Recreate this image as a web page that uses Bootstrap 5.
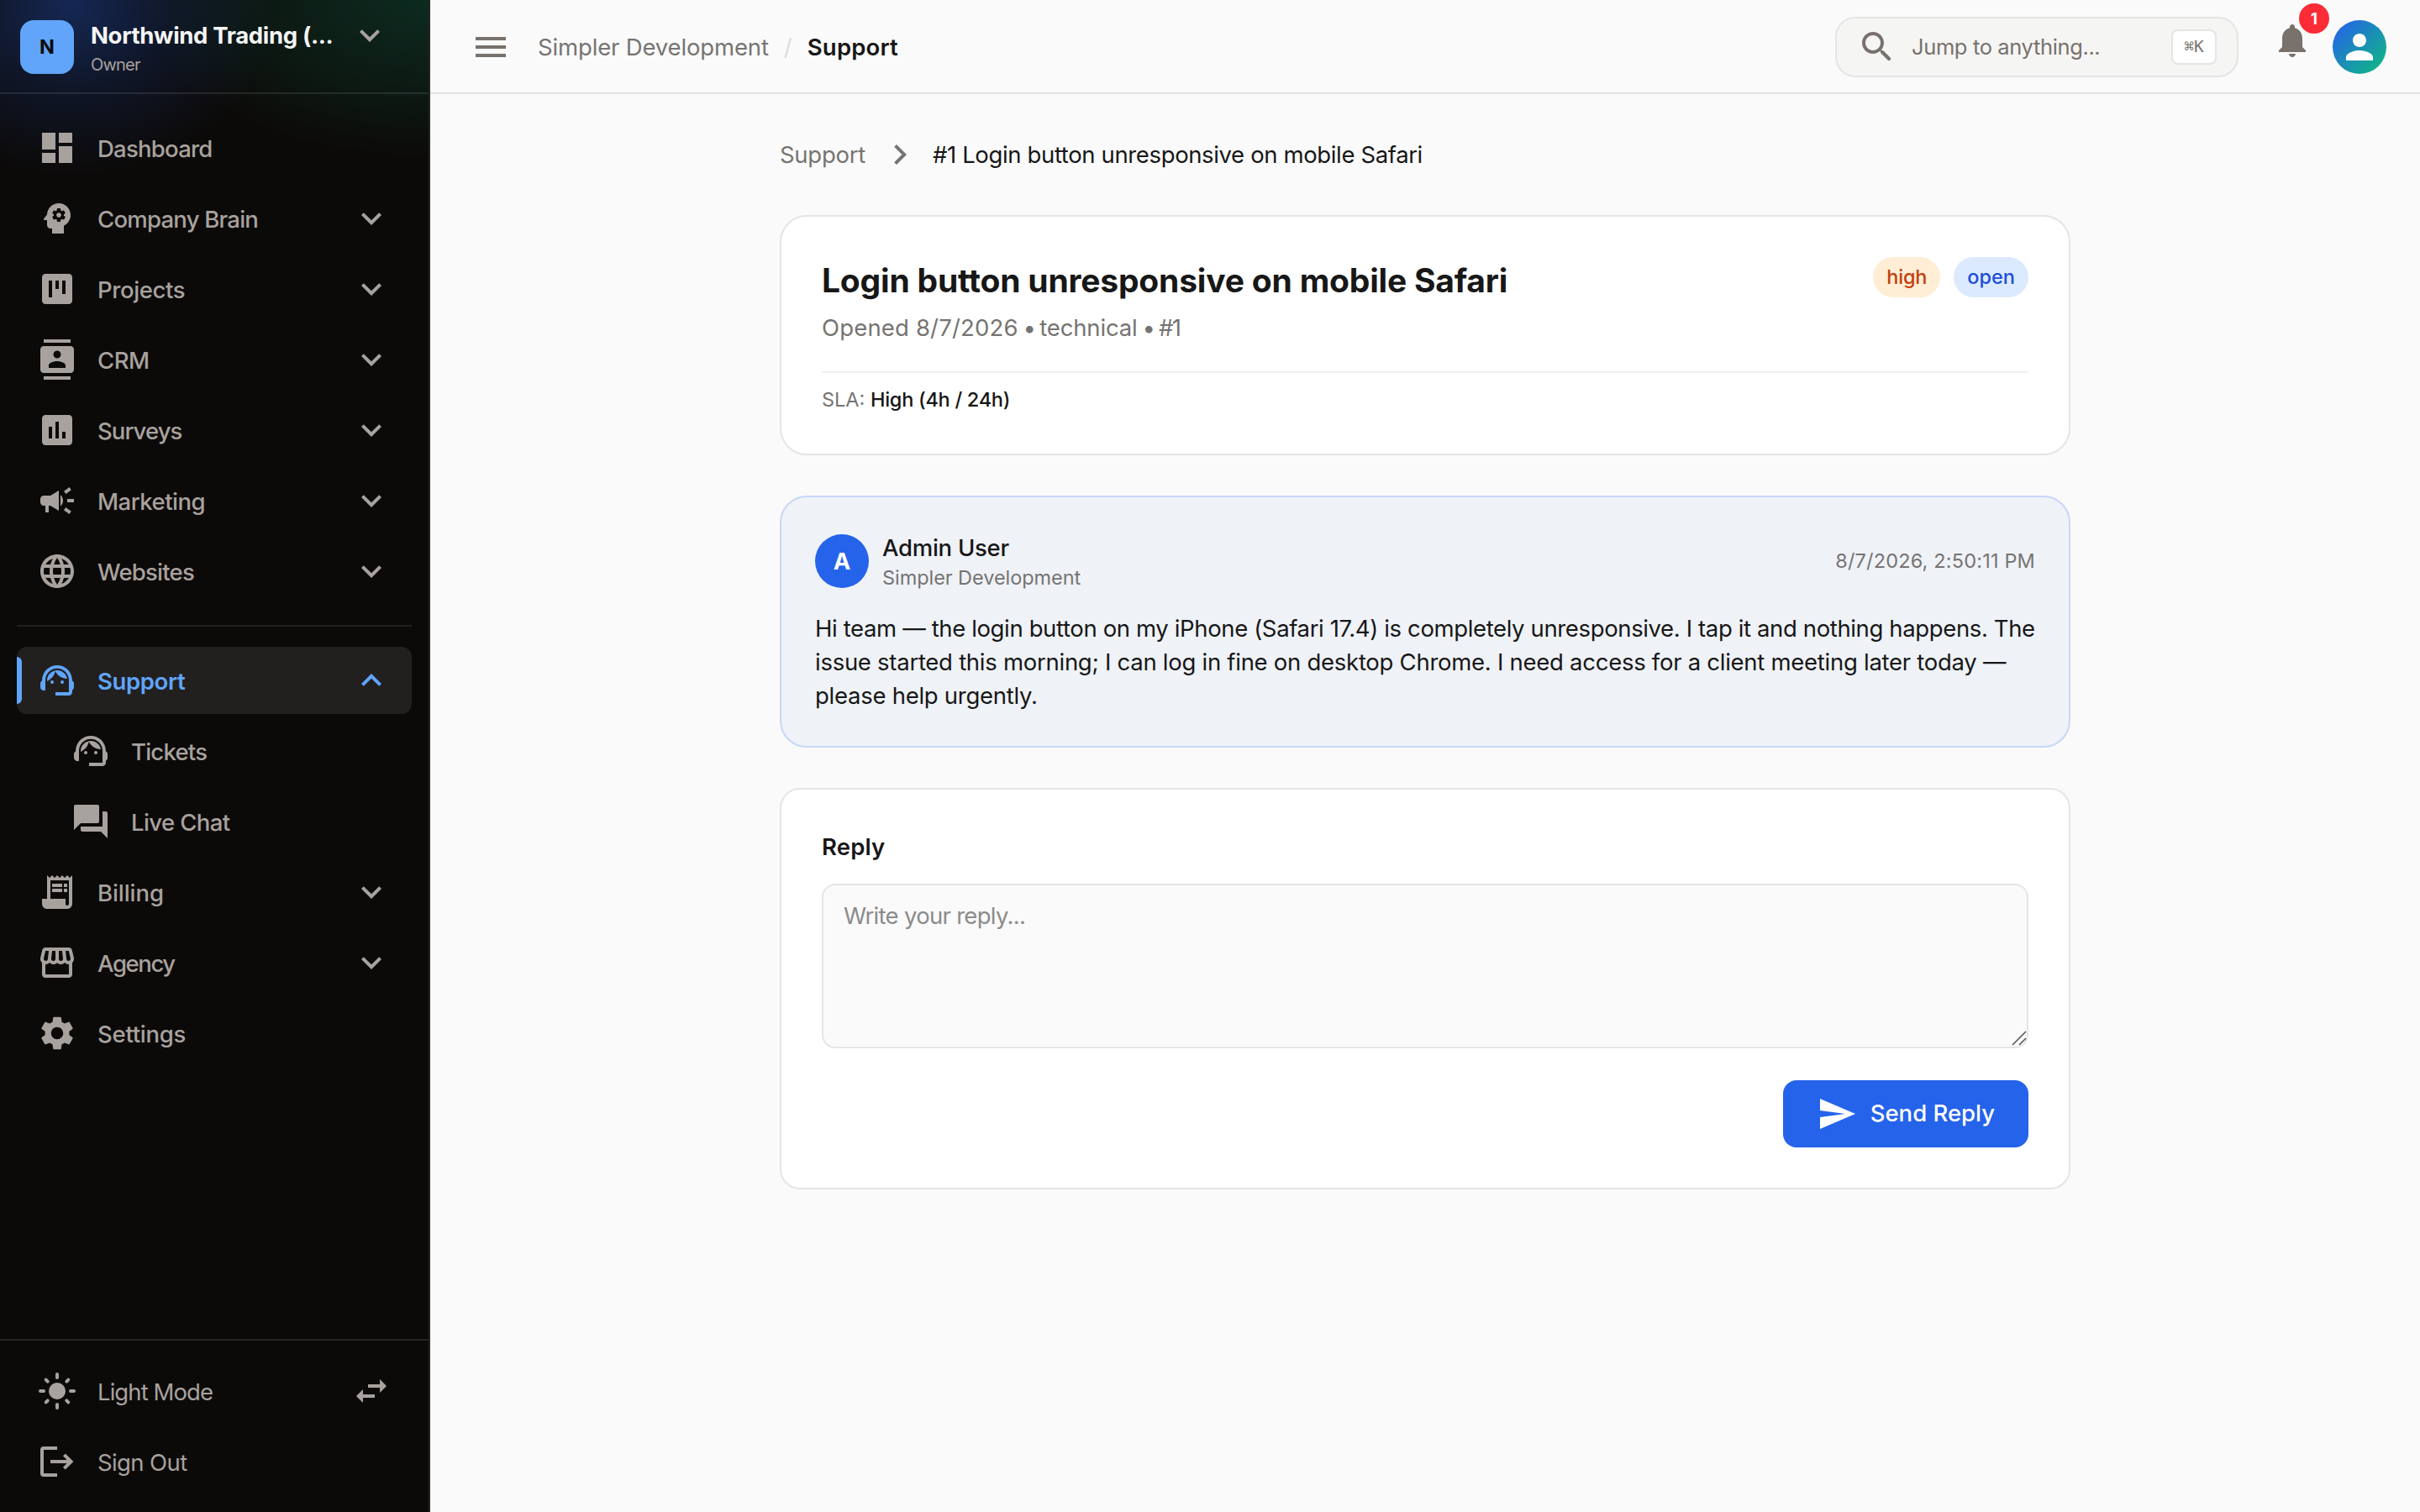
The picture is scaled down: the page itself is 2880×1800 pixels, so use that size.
<!DOCTYPE html>
<html lang="en">
<head>
<meta charset="utf-8">
<meta name="viewport" content="width=device-width, initial-scale=1">
<title>Support ticket #1</title>
<link href="https://cdn.jsdelivr.net/npm/bootstrap@5.3.0/dist/css/bootstrap.min.css" rel="stylesheet">
<style>
  :root { --ink: #171717; --muted: #78716c; --muted-text: #767472; --line: #e5e5e5; --canvas: #fafafa; --brand: #2563eb; --side: #a8a29e; }
  body { font-family: Inter, "Liberation Sans", sans-serif; font-size: 27.5px; line-height: 40px; color: var(--ink); background: var(--canvas); }
  .ico { width: 48px; height: 48px; fill: currentColor; flex: none; display: block; }

  /* Sidebar */
  .sidebar { width: 512px; border-right: 2px solid #262423; color: var(--side);
    background:
      radial-gradient(340px 190px at 510px 0, rgba(16,185,129,.19), rgba(16,185,129,.10) 50%, rgba(16,185,129,0) 100%),
      radial-gradient(240px 200px at 85px 8px, rgba(37,99,235,.33), rgba(37,99,235,.13) 50%, rgba(37,99,235,0) 100%),
      #0c0a09; }
  .side-head { height: 112px; border-bottom: 2px solid rgba(255,255,255,.1); padding: 22px 50px 0 24px; gap: 20px; }
  .org-logo { width: 64px; height: 64px; margin-top: 2px; border-radius: 16px; background: #60a5fa; color: #0c0a09; font-size: 23.5px; font-weight: 700; }
  .org-name { font-weight: 700; color: #f5f5f4; letter-spacing: -.34px; white-space: nowrap; }
  .org-role { font-size: 20px; line-height: 30px; letter-spacing: -.8px; }
  .side-head .ico { margin-top: -4px; }
  .side-nav { padding: 24px 20px; gap: 4px; }
  .side-foot { border-top: 2px solid #262423; padding: 20px; gap: 4px; }
  .side-link { display: flex; align-items: center; gap: 24px; height: 80px; padding: 0 24px; border-radius: 12px; color: var(--side); font-weight: 500; text-decoration: none; position: relative; }
  .side-link > span { flex: 1; white-space: nowrap; padding-top: 1px; }
  .side-foot .side-link { font-weight: 400; }
  .side-sub { margin-left: 40px; }
  .side-link.current { background: #22201f; color: #60a5fa; font-weight: 600; }
  .side-link.current::before { content: ""; position: absolute; left: 0; top: 12px; width: 6px; height: 56px; background: #60a5fa; border-radius: 0 6px 6px 0; }
  .side-rule { height: 2px; background: #22201f; margin: 20px 0; }

  /* Tracking steps */
  .tr-0 { letter-spacing: -.06px; } .tr-1 { letter-spacing: -.15px; } .tr-2 { letter-spacing: -.27px; }
  .tr-3 { letter-spacing: -.37px; } .tr-5 { letter-spacing: -.5px; } .tr-6 { letter-spacing: -.61px; }
  .tr-7 { letter-spacing: -.76px; } .tr-9 { letter-spacing: -.92px; } .tr-14 { letter-spacing: -1.4px; }
  .tr-18 { letter-spacing: -1.8px; } .tr-wide { letter-spacing: .17px; }

  /* Top bar */
  .topbar { height: 112px; border-bottom: 2px solid #e3e3e3; padding: 2px 40px 0 48px; }
  .trail { gap: 16px; }
  .trail .sep { color: #dcdcdc; width: 14px; text-align: center; }
  .quick { width: 480px; height: 72px; border: 2px solid var(--line); border-radius: 24px; background: #f5f5f4; padding: 0 24px; gap: 17px; color: var(--muted); font-size: 25.5px; margin-right: 40px; }
  .keycap { width: 54px; height: 42px; border: 2px solid var(--line); border-radius: 8px; background: #fff; font: 19.5px/38px "DejaVu Sans Mono", monospace; text-align: center; }
  .bell { color: var(--muted); margin: 0 24px 16px 0; }
  .bell-count { position: absolute; left: 32px; top: -20px; width: 36px; height: 36px; border-radius: 50%; background: #fb2c36; color: #fff; font-size: 18.5px; font-weight: 700; line-height: 36px; text-align: center; }
  .me { width: 64px; height: 64px; border-radius: 50%; background: linear-gradient(135deg, #2563eb 5%, #10b981 95%); color: #fff; }

  /* Ticket */
  .thread { width: 1536px; padding-top: 48px; }
  .crumbs { height: 48px; margin-bottom: 48px; }
  .crumbs .ico { margin: 0 15px 0 17px; }
  .panel { background: #fff; border: 2px solid var(--line); border-radius: 32px; padding: 48px; margin-bottom: 48px; }
  .ticket-title { font-size: 39px; line-height: 56px; font-weight: 700; letter-spacing: -.19px; margin: 0 0 8px; }
  .soft { color: var(--muted-text); }
  .fine { font-size: 23.5px; line-height: 32px; }
  .pill { height: 48px; line-height: 48px; padding: 0 16px; border-radius: 24px; font-size: 23.5px; font-weight: 500; }
  .pill-high { background: #ffedd5; color: #c2410c; letter-spacing: -.15px; }
  .pill-open { background: #dbeafe; color: #1d4ed8; }
  .sla { border-top: 2px solid #f0f0f0; margin-top: 32px; padding-top: 16px; }
  .panel-msg { background: #eff2f7; border-color: #c8d7f6; padding: 40px; }
  .author { width: 64px; height: 64px; border-radius: 50%; background: var(--brand); color: #fff; font-weight: 700; margin-right: 16px; }
  .panel-reply { border-radius: 24px; }
  .reply-box { height: 196px; border: 2px solid var(--line); border-radius: 16px; background: var(--canvas); padding: 16px 24px; font-size: 27.5px; line-height: 40px; resize: none; display: block; }
  .reply-box::placeholder { color: #8b8b8b; letter-spacing: -.7px; }
  .grip { position: absolute; right: 2px; bottom: 3px; width: 18px; height: 18px; stroke: #555; stroke-width: 1.6; fill: none; }
  .send { height: 80px; margin-top: 38px; padding: 0 40px; border: 0; border-radius: 16px; background: var(--brand); color: #fff; font-size: 27.5px; font-weight: 500; gap: 16px; }
</style>
<script src="https://cdn.jsdelivr.net/npm/bootstrap@5.3.0/dist/js/bootstrap.bundle.min.js"></script>
</head>
<body>
<svg class="d-none" xmlns="http://www.w3.org/2000/svg">
  <symbol id="more" viewBox="0 0 24 24"><path d="M16.59 8.59L12 13.17 7.41 8.59 6 10l6 6 6-6z"/></symbol>
  <symbol id="less" viewBox="0 0 24 24"><path d="M12 8l-6 6 1.41 1.41L12 10.83l4.59 4.58L18 14z"/></symbol>
  <symbol id="agent" viewBox="0 0 24 24"><path d="M21 12.22C21 6.73 16.74 3 12 3c-4.69 0-9 3.65-9 9.28-.6.34-1 .98-1 1.72v2c0 1.1.9 2 2 2h1v-6.1c0-3.87 3.13-7 7-7s7 3.13 7 7V19h-8v2h8c1.1 0 2-.9 2-2v-1.22c.59-.31 1-.92 1-1.64v-2.3c0-.7-.41-1.31-1-1.62z"/><circle cx="9" cy="13" r="1"/><circle cx="15" cy="13" r="1"/><path d="M18 11.03C17.52 8.18 15.04 6 12.05 6c-3.03 0-6.29 2.51-6.03 6.45 2.47-1.01 4.33-3.21 4.86-5.89 1.31 2.63 4 4.44 7.12 4.47z"/></symbol>
</svg>

<div class="d-flex vh-100 overflow-hidden">
  <aside class="sidebar d-flex flex-column flex-shrink-0">
    <div class="side-head d-flex align-items-start flex-shrink-0">
      <div class="org-logo d-flex align-items-center justify-content-center flex-shrink-0">N</div>
      <div class="flex-grow-1">
        <div class="org-name">Northwind Trading (...</div>
        <div class="org-role">Owner</div>
      </div>
      <svg class="ico"><use href="#more"/></svg>
    </div>

    <nav class="side-nav d-flex flex-column flex-grow-1">
      <a class="side-link" href="#"><svg class="ico" viewBox="0 0 24 24"><path d="M3 13h8V3H3v10zm0 8h8v-6H3v6zm10 0h8V11h-8v10zm0-18v6h8V3h-8z"/></svg><span class="tr-7">Dashboard</span></a>
      <a class="side-link" href="#"><svg class="ico" viewBox="0 0 24 24"><path d="M13 8.57c-.79 0-1.43.64-1.43 1.43s.64 1.43 1.43 1.43 1.43-.64 1.43-1.43-.64-1.43-1.43-1.43z"/><path d="M13 3C9.25 3 6.2 5.94 6.02 9.64L4.1 12.2c-.25.33-.01.8.4.8H6v3c0 1.1.9 2 2 2h1v3h7v-4.68c2.36-1.12 4-3.53 4-6.32 0-3.87-3.13-7-7-7zm3 7c0 .13-.01.26-.02.39l.83.66c.08.06.1.16.05.25l-.8 1.39c-.05.09-.16.12-.24.09l-.99-.4c-.21.16-.43.29-.67.39L14 13.83c-.01.1-.1.17-.2.17h-1.6c-.1 0-.18-.07-.2-.17l-.15-1.06c-.25-.1-.47-.23-.68-.39l-.99.4c-.09.03-.2 0-.25-.09l-.8-1.39c-.05-.08-.03-.19.05-.25l.84-.66c-.01-.13-.02-.26-.02-.39s.02-.27.04-.39l-.85-.66c-.08-.06-.1-.16-.05-.26l.8-1.38c.05-.09.15-.12.24-.09l1 .4c.2-.15.43-.29.67-.39L12 6.17c.02-.1.1-.17.2-.17h1.6c.1 0 .18.07.2.17l.15 1.06c.24.1.46.23.67.39l1-.4c.09-.03.2 0 .24.09l.8 1.38c.05.09.03.2-.05.26l-.85.66c.03.12.04.25.04.39z"/></svg><span class="tr-7">Company Brain</span><svg class="ico"><use href="#more"/></svg></a>
      <a class="side-link" href="#"><svg class="ico" viewBox="0 0 24 24"><path d="M19 3H5c-1.1 0-2 .9-2 2v14c0 1.1.9 2 2 2h14c1.1 0 2-.9 2-2V5c0-1.1-.9-2-2-2zM9 17H7V7h2v10zm4-5h-2V7h2v5zm4 3h-2V7h2v8z"/></svg><span class="tr-3">Projects</span><svg class="ico"><use href="#more"/></svg></a>
      <a class="side-link" href="#"><svg class="ico" viewBox="0 0 24 24"><path d="M20 0H4v2h16V0zM4 24h16v-2H4v2zM20 4H4c-1.1 0-2 .9-2 2v12c0 1.1.9 2 2 2h16c1.1 0 2-.9 2-2V6c0-1.1-.9-2-2-2zm-8 2.75c1.24 0 2.25 1.01 2.25 2.25s-1.01 2.25-2.25 2.25S9.75 10.24 9.75 9 10.76 6.75 12 6.75zM17 17H7v-1.5c0-1.67 3.33-2.5 5-2.5s5 .83 5 2.5V17z"/></svg><span class="tr-5">CRM</span><svg class="ico"><use href="#more"/></svg></a>
      <a class="side-link" href="#"><svg class="ico" viewBox="0 0 24 24"><path d="M19 3H5c-1.1 0-2 .9-2 2v14c0 1.1.9 2 2 2h14c1.1 0 2-.9 2-2V5c0-1.1-.9-2-2-2zM9 17H7v-7h2v7zm4 0h-2V7h2v10zm4 0h-2v-4h2v4z"/></svg><span class="tr-9">Surveys</span><svg class="ico"><use href="#more"/></svg></a>
      <a class="side-link" href="#"><svg class="ico" viewBox="0 0 24 24"><path d="M18 11v2h4v-2h-4zm-2 6.61c.96.71 2.21 1.65 3.2 2.39.4-.53.8-1.07 1.2-1.6-.99-.74-2.24-1.68-3.2-2.4-.4.54-.8 1.08-1.2 1.61zM20.4 5.6c-.4-.53-.8-1.07-1.2-1.6-.99.74-2.24 1.68-3.2 2.4.4.53.8 1.07 1.2 1.6.96-.72 2.21-1.65 3.2-2.4zM4 9c-1.1 0-2 .9-2 2v2c0 1.1.9 2 2 2h1v4h2v-4h1l5 3V6L8 9H4zm11.5 3c0-1.33-.58-2.53-1.5-3.35v6.69c.92-.81 1.5-2.01 1.5-3.34z"/></svg><span class="tr-5">Marketing</span><svg class="ico"><use href="#more"/></svg></a>
      <a class="side-link" href="#"><svg class="ico" viewBox="0 0 24 24"><path d="M11.99 2C6.47 2 2 6.48 2 12s4.47 10 9.99 10C17.52 22 22 17.52 22 12S17.52 2 11.99 2zm6.93 6h-2.95c-.32-1.25-.78-2.45-1.38-3.56 1.84.63 3.37 1.91 4.33 3.56zM12 4.04c.83 1.2 1.48 2.53 1.91 3.96h-3.82c.43-1.43 1.08-2.76 1.91-3.96zM4.26 14C4.1 13.36 4 12.69 4 12s.1-1.36.26-2h3.38c-.08.66-.14 1.32-.14 2 0 .68.06 1.34.14 2H4.26zm.82 2h2.95c.32 1.25.78 2.45 1.38 3.56-1.84-.63-3.37-1.9-4.33-3.56zm2.95-8H5.08c.96-1.66 2.49-2.93 4.33-3.56C8.81 5.55 8.35 6.75 8.03 8zM12 19.96c-.83-1.2-1.48-2.53-1.91-3.96h3.82c-.43 1.43-1.08 2.76-1.91 3.96zM14.34 14H9.66c-.09-.66-.16-1.32-.16-2 0-.68.07-1.35.16-2h4.68c.09.65.16 1.32.16 2 0 .68-.07 1.34-.16 2zm.25 5.56c.6-1.11 1.06-2.31 1.38-3.56h2.95c-.96 1.65-2.49 2.93-4.33 3.56zM16.36 14c.08-.66.14-1.32.14-2 0-.68-.06-1.34-.14-2h3.38c.16.64.26 1.31.26 2s-.1 1.36-.26 2h-3.38z"/></svg><span class="tr-7">Websites</span><svg class="ico"><use href="#more"/></svg></a>
      <div class="side-rule"></div>
      <a class="side-link current" href="#"><svg class="ico"><use href="#agent"/></svg><span class="tr-3">Support</span><svg class="ico"><use href="#less"/></svg></a>
      <a class="side-link side-sub" href="#"><svg class="ico"><use href="#agent"/></svg><span class="tr-7">Tickets</span></a>
      <a class="side-link side-sub" href="#"><svg class="ico" viewBox="0 0 24 24"><path d="M21 6h-2v9H6v2c0 .55.45 1 1 1h11l4 4V7c0-.55-.45-1-1-1zm-4 6V3c0-.55-.45-1-1-1H3c-.55 0-1 .45-1 1v14l4-4h10c.55 0 1-.45 1-1z"/></svg><span class="tr-6">Live Chat</span></a>
      <a class="side-link" href="#"><svg class="ico" viewBox="0 0 24 24"><path d="M19.5 3.5L18 2l-1.5 1.5L15 2l-1.5 1.5L12 2l-1.5 1.5L9 2 7.5 3.5 6 2v14H3v3c0 1.66 1.34 3 3 3h12c1.66 0 3-1.34 3-3V2l-1.5 1.5zM19 19c0 .55-.45 1-1 1s-1-.45-1-1v-3H8V5h11v14z"/><path d="M9 7h6v2H9zM16 7h2v2h-2zM9 10h6v2H9zM16 10h2v2h-2z"/></svg><span class="tr-0">Billing</span><svg class="ico"><use href="#more"/></svg></a>
      <a class="side-link" href="#"><svg class="ico" viewBox="0 0 24 24"><path d="M21.9 8.89l-1.05-4.37c-.22-.9-1-1.52-1.91-1.52H5.05c-.9 0-1.69.63-1.9 1.52L2.1 8.89c-.24 1.02-.02 2.06.62 2.88.08.11.19.19.28.29V19c0 1.1.9 2 2 2h14c1.1 0 2-.9 2-2v-6.94c.09-.09.2-.18.28-.28.64-.82.87-1.87.62-2.89zm-2.99-3.9l1.05 4.37c.1.42.01.84-.25 1.17-.14.18-.44.47-.94.47-.61 0-1.14-.49-1.21-1.14L16.98 5l1.93-.01zM13 5h1.96l.54 4.52c.05.39-.07.78-.33 1.07-.22.26-.54.41-.95.41-.67 0-1.22-.59-1.22-1.31V5zM8.49 9.52L9.04 5H11v4.69c0 .72-.55 1.31-1.29 1.31-.34 0-.65-.15-.89-.41-.25-.29-.37-.68-.33-1.07zm-4.45-.16L5.05 5h1.97l-.58 4.86c-.08.65-.6 1.14-1.21 1.14-.49 0-.8-.29-.93-.47-.27-.32-.36-.75-.26-1.17zM5 19v-6.03c.08.01.15.03.23.03.87 0 1.66-.36 2.24-.95.6.6 1.4.95 2.31.95.87 0 1.65-.36 2.23-.93.59.57 1.39.93 2.29.93.84 0 1.64-.35 2.24-.95.58.59 1.37.95 2.24.95.08 0 .15-.02.23-.03V19H5z"/></svg><span class="tr-14">Agency</span><svg class="ico"><use href="#more"/></svg></a>
      <a class="side-link" href="#"><svg class="ico" viewBox="0 0 24 24"><path d="M19.14 12.94c.04-.3.06-.61.06-.94 0-.32-.02-.64-.07-.94l2.03-1.58c.18-.14.23-.41.12-.61l-1.92-3.32c-.12-.22-.37-.29-.59-.22l-2.39.96c-.5-.38-1.03-.7-1.62-.94l-.36-2.54c-.04-.24-.24-.41-.48-.41h-3.84c-.24 0-.43.17-.47.41l-.36 2.54c-.59.24-1.13.57-1.62.94l-2.39-.96c-.22-.08-.47 0-.59.22L2.74 8.87c-.12.21-.08.47.12.61l2.03 1.58c-.05.3-.09.63-.09.94s.02.64.07.94l-2.03 1.58c-.18.14-.23.41-.12.61l1.92 3.32c.12.22.37.29.59.22l2.39-.96c.5.38 1.03.7 1.62.94l.36 2.54c.05.24.24.41.48.41h3.84c.24 0 .44-.17.47-.41l.36-2.54c.59-.24 1.13-.56 1.62-.94l2.39.96c.22.08.47 0 .59-.22l1.92-3.32c.12-.22.07-.47-.12-.61l-2.01-1.58zM12 15.6c-1.98 0-3.6-1.62-3.6-3.6s1.62-3.6 3.6-3.6 3.6 1.62 3.6 3.6-1.62 3.6-3.6 3.6z"/></svg><span class="tr-2">Settings</span></a>
    </nav>

    <div class="side-foot d-flex flex-column">
      <a class="side-link" href="#"><svg class="ico" viewBox="0 0 24 24"><circle cx="12" cy="12" r="5"/><path fill="none" stroke="currentColor" stroke-width="2" stroke-linecap="round" d="M12 2v2M12 20v2M2 12h2M20 12h2M5.35 5.35l1 1M17.65 17.65l1 1M5.35 18.65l1-1M17.65 6.35l1-1"/></svg><span class="tr-9">Light Mode</span><svg class="ico" viewBox="0 0 24 24"><path d="M6.99 11L3 15l3.99 4v-3H14v-2H6.99v-3zM21 9l-3.99-4v3H10v2h7.01v3L21 9z"/></svg></a>
      <a class="side-link" href="#"><svg class="ico" viewBox="0 0 24 24"><path fill="none" stroke="currentColor" stroke-width="2" d="M12 4H4a1 1 0 0 0-1 1v14a1 1 0 0 0 1 1h8M8 12h12M16.2 7.9l4.1 4.1-4.1 4.1"/></svg><span class="tr-6">Sign Out</span></a>
    </div>
  </aside>

  <div class="flex-grow-1 d-flex flex-column">
    <header class="topbar d-flex align-items-center flex-shrink-0">
      <svg class="ico" viewBox="0 0 24 24" color="#78716c"><path d="M3 18h18v-2H3v2zm0-5h18v-2H3v2zm0-7v2h18V6H3z"/></svg>
      <div class="trail d-flex align-items-center flex-grow-1 ms-4 ps-2">
        <span class="soft tr-1">Simpler Development</span>
        <span class="sep">/</span>
        <span class="fw-semibold tr-wide">Support</span>
      </div>
      <div class="quick d-flex align-items-center">
        <svg class="ico" viewBox="0 0 24 24"><path d="M15.5 14h-.79l-.28-.27C15.41 12.59 16 11.11 16 9.5 16 5.91 13.09 3 9.5 3S3 5.91 3 9.5 5.91 16 9.5 16c1.61 0 3.09-.59 4.23-1.57l.27.28v.79l4.3 4.29a1.05 1.05 0 0 0 1.49-1.49L15.5 14zm-6 0C7.01 14 5 11.99 5 9.5S7.01 5 9.5 5 14 7.01 14 9.5 11.99 14 9.5 14z"/></svg>
        <span class="flex-grow-1 tr-3">Jump to anything...</span>
        <span class="keycap">⌘K</span>
      </div>
      <div class="bell position-relative">
        <svg class="ico" viewBox="0 0 24 24"><path d="M12 22c1.1 0 2-.9 2-2h-4c0 1.1.89 2 2 2zm6-6v-5c0-3.07-1.64-5.64-4.5-6.32V4c0-.83-.67-1.5-1.5-1.5s-1.5.67-1.5 1.5v.68C7.63 5.36 6 7.92 6 11v5l-2 2v1h16v-1l-2-2z"/></svg>
        <span class="bell-count">1</span>
      </div>
      <div class="me d-flex align-items-center justify-content-center">
        <svg class="ico" viewBox="0 0 24 24"><path d="M12 12c2.21 0 4-1.79 4-4s-1.79-4-4-4-4 1.79-4 4 1.79 4 4 4zm0 2c-2.67 0-8 1.34-8 4v2h16v-2c0-2.66-5.33-4-8-4z"/></svg>
      </div>
    </header>

    <main class="thread mx-auto">
      <div class="crumbs d-flex align-items-center">
        <span class="soft tr-2">Support</span>
        <svg class="ico soft" viewBox="0 0 24 24"><path d="M10 6L8.59 7.41 13.17 12l-4.58 4.59L10 18l6-6z"/></svg>
        <span class="tr-3">#1 Login button unresponsive on mobile Safari</span>
      </div>

      <section class="panel">
        <div class="d-flex justify-content-between align-items-start">
          <div>
            <h1 class="ticket-title">Login button unresponsive on mobile Safari</h1>
            <div class="soft"><span class="tr-wide">Opened 8/7/2026</span><span class="tr-18"> • </span><span class="tr-1">technical</span><span class="tr-18"> • #1</span></div>
          </div>
          <div class="d-flex gap-3">
            <span class="pill pill-high">high</span>
            <span class="pill pill-open">open</span>
          </div>
        </div>
        <div class="sla fine"><span class="soft">SLA:</span> <span class="fw-medium tr-2">High (4h / 24h)</span></div>
      </section>

      <section class="panel panel-msg">
        <div class="d-flex align-items-center mb-4">
          <div class="author d-flex align-items-center justify-content-center">A</div>
          <div class="flex-grow-1">
            <div class="fw-medium tr-2">Admin User</div>
            <div class="soft fine tr-0">Simpler Development</div>
          </div>
          <div class="soft fine tr-wide">8/7/2026, 2:50:11 PM</div>
        </div>
        <div class="text-nowrap"><span class="tr-3">Hi team — the login button on my iPhone (Safari 17.4) is completely unresponsive. I tap it and nothing happens. The</span><br><span class="tr-2">issue started this morning; I can log in fine on desktop Chrome. I need access for a client meeting later today —</span><br><span class="tr-2">please help urgently.</span></div>
      </section>

      <section class="panel panel-reply">
        <div class="fw-semibold mb-4 tr-wide">Reply</div>
        <div class="position-relative">
          <textarea class="reply-box form-control" placeholder="Write your reply..."></textarea>
          <svg class="grip" viewBox="0 0 18 18"><path d="M1 17L17 1M9 17l8-8"/></svg>
        </div>
        <div class="d-flex justify-content-end">
          <button class="send btn d-flex align-items-center"><svg class="ico" viewBox="0 0 24 24"><path d="M2.01 21L23 12 2.01 3 2 10l15 2-15 2z"/></svg><span>Send Reply</span></button>
        </div>
      </section>
    </main>
  </div>
</div>
</body>
</html>
